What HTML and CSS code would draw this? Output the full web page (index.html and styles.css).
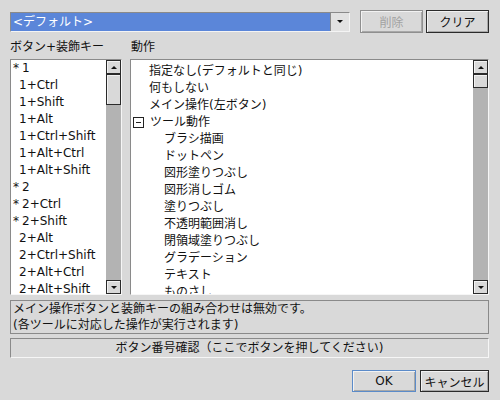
FILE: index.html
```html
<!DOCTYPE html>
<html lang="ja">
<head>
    <meta charset="UTF-8">
    <title>ボタン設定</title>
    <link rel="stylesheet" href="styles.css">
</head>
<body>
    <div class="dialog">
        <div class="top-row">
            <div class="combo">
                <div class="combo-value">&lt;デフォルト&gt;</div>
                <div class="combo-arrow"><span class="tri-down"></span></div>
            </div>
            <button class="btn btn-top" disabled>削除</button>
            <button class="btn btn-top">クリア</button>
        </div>

        <div class="labels">
            <div class="label-left">ボタン+装飾キー</div>
            <div class="label-right">動作</div>
        </div>

        <div class="lists">
            <div class="listbox">
                <div class="items keys">
                    <div class="item"><span class="mark">*</span>1</div>
                    <div class="item"><span class="mark"></span>1+Ctrl</div>
                    <div class="item"><span class="mark"></span>1+Shift</div>
                    <div class="item"><span class="mark"></span>1+Alt</div>
                    <div class="item"><span class="mark"></span>1+Ctrl+Shift</div>
                    <div class="item"><span class="mark"></span>1+Alt+Ctrl</div>
                    <div class="item"><span class="mark"></span>1+Alt+Shift</div>
                    <div class="item"><span class="mark">*</span>2</div>
                    <div class="item"><span class="mark">*</span>2+Ctrl</div>
                    <div class="item"><span class="mark">*</span>2+Shift</div>
                    <div class="item"><span class="mark"></span>2+Alt</div>
                    <div class="item"><span class="mark"></span>2+Ctrl+Shift</div>
                    <div class="item"><span class="mark"></span>2+Alt+Ctrl</div>
                    <div class="item"><span class="mark"></span>2+Alt+Shift</div>
                </div>
                <div class="scrollbar">
                    <div class="sb-btn"><span class="tri-up"></span></div>
                    <div class="sb-track">
                        <div class="sb-thumb thumb-left"></div>
                    </div>
                    <div class="sb-btn"><span class="tri-down"></span></div>
                </div>
            </div>

            <div class="listbox">
                <div class="items actions">
                    <div class="item lvl1">指定なし(デフォルトと同じ)</div>
                    <div class="item lvl1">何もしない</div>
                    <div class="item lvl1">メイン操作(左ボタン)</div>
                    <div class="item group"><span class="toggle"></span>ツール動作</div>
                    <div class="item lvl2">ブラシ描画</div>
                    <div class="item lvl2">ドットペン</div>
                    <div class="item lvl2">図形塗りつぶし</div>
                    <div class="item lvl2">図形消しゴム</div>
                    <div class="item lvl2">塗りつぶし</div>
                    <div class="item lvl2">不透明範囲消し</div>
                    <div class="item lvl2">閉領域塗りつぶし</div>
                    <div class="item lvl2">グラデーション</div>
                    <div class="item lvl2">テキスト</div>
                    <div class="item lvl2">ものさし</div>
                </div>
                <div class="scrollbar">
                    <div class="sb-btn"><span class="tri-up"></span></div>
                    <div class="sb-track">
                        <div class="sb-thumb thumb-right"></div>
                    </div>
                    <div class="sb-btn"><span class="tri-down"></span></div>
                </div>
            </div>
        </div>

        <div class="info">
            メイン操作ボタンと装飾キーの組み合わせは無効です。<br>
            (各ツールに対応した操作が実行されます)
        </div>

        <div class="confirm">ボタン番号確認（ここでボタンを押してください)</div>

        <div class="footer">
            <button class="btn btn-ok">OK</button>
            <button class="btn btn-cancel">キャンセル</button>
        </div>
    </div>
</body>
</html>
```

FILE: styles.css
```css
body {
    margin: 0;
    width: 500px;
    height: 400px;
    background-color: #d9d9d9;
    font-family: "DejaVu Sans", "Noto Sans CJK JP", sans-serif;
    font-size: 12px;
    color: #111;
    overflow: hidden;
}
.dialog {
    padding: 10px 11px 0 10px;
}
.top-row {
    display: flex;
    align-items: center;
    height: 23px;
}
.combo {
    flex: 1;
    display: flex;
    height: 20px;
    box-sizing: border-box;
    border: 1px solid;
    border-color: #8a8a8a #f4f4f4 #f4f4f4 #8a8a8a;
    margin-right: 7px;
}
.combo-value {
    flex: 1;
    background-color: #5b86d9;
    color: #fff;
    padding-left: 2px;
    line-height: 18px;
}
.combo-arrow {
    width: 18px;
    border-left: 1px solid #8a8a8a;
    background-color: #e2e2e2;
    display: flex;
    align-items: center;
    justify-content: center;
}
.tri-down, .tri-up {
    width: 0;
    height: 0;
    border-left: 3px solid transparent;
    border-right: 3px solid transparent;
}
.tri-down {
    border-top: 3px solid #111;
}
.tri-up {
    border-bottom: 3px solid #111;
}
.btn {
    font-family: inherit;
    font-size: 12px;
    background-color: #d9d9d9;
    border: 1px solid #2a2a2a;
    box-shadow: inset 1px 1px #f2f2f2, inset -1px -1px #a8a8a8;
    color: #111;
    padding: 0;
    margin: 0;
}
.btn-top {
    width: 63px;
    height: 23px;
    margin-left: 3px;
}
.btn-top:disabled {
    border-color: #8f8f8f;
    color: #a2a2a2;
}
.labels {
    display: flex;
    margin-top: 5px;
    height: 21px;
    line-height: 18px;
}
.label-left {
    width: 121px;
}
.lists {
    display: grid;
    grid-template-columns: 112px 1fr;
    gap: 8px;
    height: 236px;
}
.listbox {
    display: flex;
    background-color: #fff;
    border: 1px solid;
    border-color: #8a8a8a #f6f6f6 #f6f6f6 #8a8a8a;
    overflow: hidden;
}
.items {
    flex: 1;
    overflow: hidden;
}
.item {
    height: 17px;
    line-height: 17px;
    white-space: nowrap;
}
.keys .item {
    padding-left: 2px;
}
.mark {
    display: inline-block;
    width: 9px;
}
.mark:empty {
    width: 6px;
}
.actions {
    padding-top: 3px;
}
.lvl1 {
    padding-left: 18px;
}
.lvl2 {
    padding-left: 33px;
}
.group {
    display: flex;
    align-items: center;
    padding-left: 2px;
}
.toggle {
    position: relative;
    width: 9px;
    height: 9px;
    border: 1px solid #222;
    margin-right: 6px;
}
.toggle::after {
    content: "";
    position: absolute;
    left: 2px;
    right: 2px;
    top: 4px;
    height: 1px;
    background-color: #222;
}
.scrollbar {
    width: 15px;
    display: flex;
    flex-direction: column;
    background-color: #b3b3b3;
}
.sb-btn, .sb-thumb {
    box-sizing: border-box;
    background-color: #d9d9d9;
    border: 1px solid #2a2a2a;
    box-shadow: inset 1px 1px #f2f2f2;
}
.sb-btn {
    height: 14px;
    display: flex;
    align-items: center;
    justify-content: center;
}
.sb-track {
    flex: 1;
}
.thumb-left {
    height: 31px;
}
.thumb-right {
    height: 14px;
}
.info {
    margin-top: 5px;
    height: 34px;
    box-sizing: border-box;
    border: 1px solid #8a8a8a;
    padding: 0 2px;
    line-height: 16px;
}
.confirm {
    margin-top: 4px;
    height: 20px;
    box-sizing: border-box;
    border: 1px solid;
    border-color: #8a8a8a #f6f6f6 #f6f6f6 #8a8a8a;
    text-align: center;
    line-height: 18px;
}
.footer {
    display: flex;
    justify-content: flex-end;
    gap: 4px;
    margin-top: 12px;
}
.btn-ok {
    width: 64px;
    height: 22px;
    border-color: #5b8bc9;
}
.btn-cancel {
    width: 69px;
    height: 22px;
}
```
